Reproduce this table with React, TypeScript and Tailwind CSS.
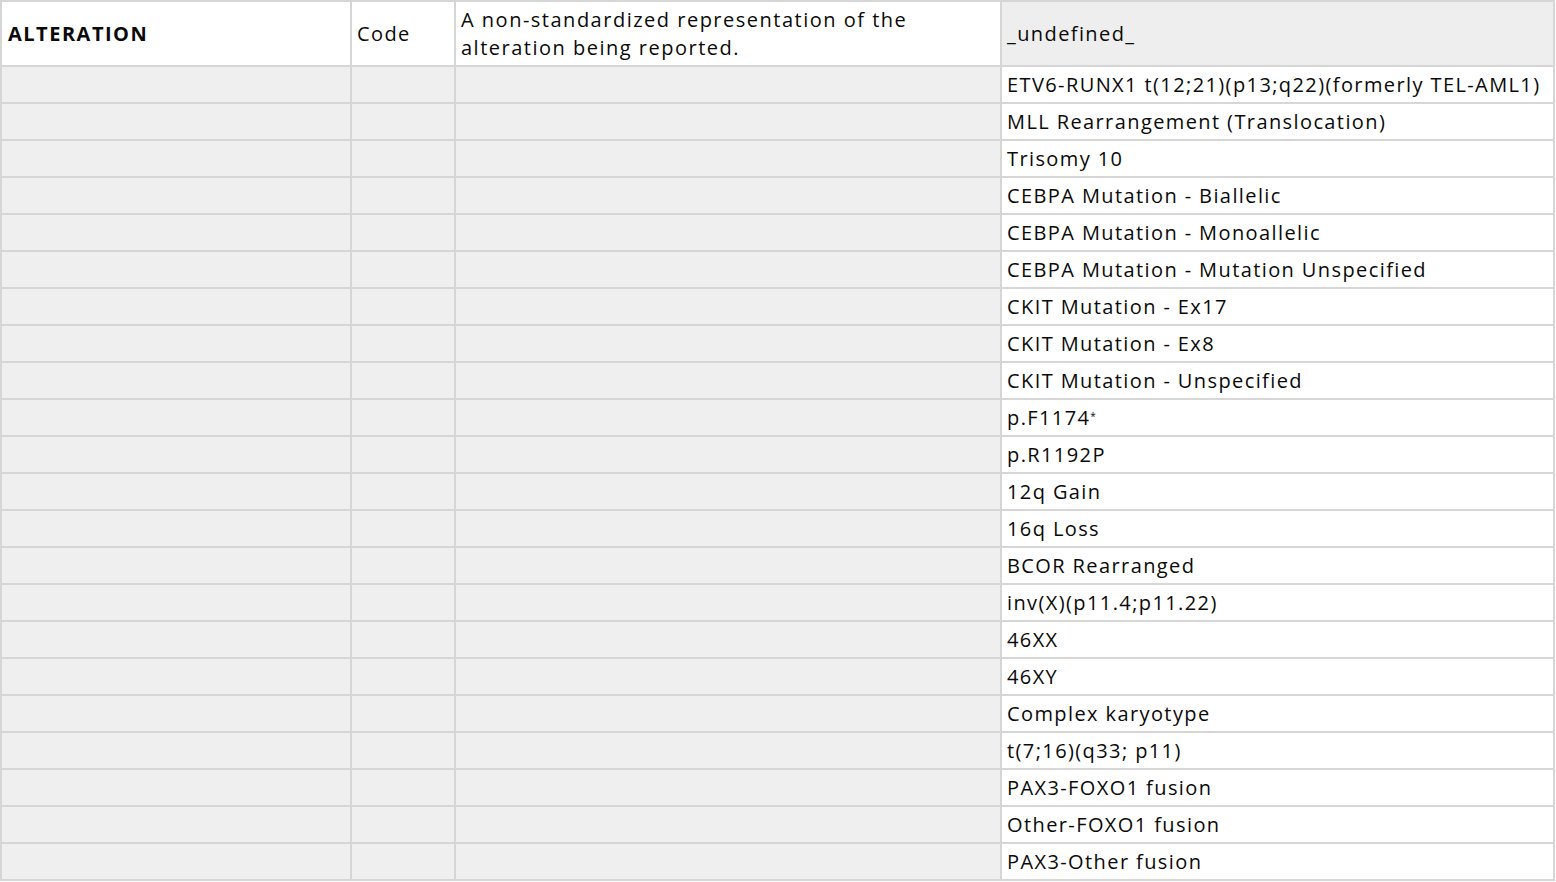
import React from "react";

const rows = [
  "ETV6-RUNX1 t(12;21)(p13;q22)(formerly TEL-AML1)",
  "MLL Rearrangement (Translocation)",
  "Trisomy 10",
  "CEBPA Mutation - Biallelic",
  "CEBPA Mutation - Monoallelic",
  "CEBPA Mutation - Mutation Unspecified",
  "CKIT Mutation - Ex17",
  "CKIT Mutation - Ex8",
  "CKIT Mutation - Unspecified",
  "p.F1174*",
  "p.R1192P",
  "12q Gain",
  "16q Loss",
  "BCOR Rearranged",
  "inv(X)(p11.4;p11.22)",
  "46XX",
  "46XY",
  "Complex karyotype",
  "t(7;16)(q33; p11)",
  "PAX3-FOXO1 fusion",
  "Other-FOXO1 fusion",
  "PAX3-Other fusion",
];

function renderText(t: string) {
  if (t === "p.F1174*") {
    return (
      <>
        p.F1174<sup className="text-[10px] relative -top-[2px]">*</sup>
      </>
    );
  }
  return t;
}

export default function App() {
  return (
    <div
      className="w-[1556px] h-[882px] overflow-hidden bg-white text-[20px] tracking-[1.4px] text-[#0a0a0a]"
      style={{ fontFamily: "'Open Sans', sans-serif" }}
    >
      <div className="grid grid-cols-[348px_102px_544px_551px] auto-rows-[35px] grid-rows-[63px] gap-[2px] p-[2px] bg-[#d6d6d6] w-[1555px]">
        <div className="bg-white flex items-center px-[6px] font-bold tracking-[1.5px]">ALTERATION</div>
        <div className="bg-white flex items-center pl-[5px]">Code</div>
        <div className="bg-white flex items-center pl-[5px] leading-[28px] whitespace-nowrap tracking-[1.5px]">
          A non-standardized representation of the
          <br />
          alteration being reported.
        </div>
        <div className="bg-[#eeeeee] flex items-center pl-[5px]">_undefined_</div>
        {rows.map((r, i) => (
          <React.Fragment key={i}>
            <div className="bg-[#efefef]" />
            <div className="bg-[#efefef]" />
            <div className="bg-[#efefef]" />
            <div className="bg-white flex items-center pl-[5px] whitespace-nowrap">{renderText(r)}</div>
          </React.Fragment>
        ))}
      </div>
    </div>
  );
}
